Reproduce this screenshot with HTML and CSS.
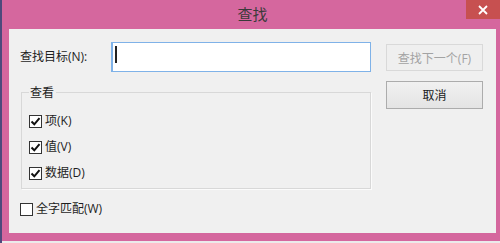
FILE: index.html
```html
<!DOCTYPE html>
<html lang="zh-CN">
<head>
<meta charset="utf-8">
<title>查找</title>
<link rel="stylesheet" href="styles.css">
</head>
<body>
<div class="window">
  <div class="titlebar">
    <span class="title">查找</span>
    <div class="close">
      <svg width="10" height="10" viewBox="0 0 10 10"><path d="M1 1 L9 9 M9 1 L1 9" stroke="#fff" stroke-width="1.8" fill="none"/></svg>
    </div>
  </div>
  <div class="content">
    <div class="left">
      <div class="find-row">
        <span class="label">查找目标(N):</span>
        <div class="input"><span class="caret"></span></div>
      </div>
      <fieldset class="group">
        <legend>查看</legend>
        <div class="check"><span class="box"><svg width="11" height="11" viewBox="0 0 11 11"><path d="M1.5 5.5 L4.3 8.3 L9.5 2.2" stroke="#111" stroke-width="2" fill="none"/></svg></span>项(K)</div>
        <div class="check"><span class="box"><svg width="11" height="11" viewBox="0 0 11 11"><path d="M1.5 5.5 L4.3 8.3 L9.5 2.2" stroke="#111" stroke-width="2" fill="none"/></svg></span>值(V)</div>
        <div class="check"><span class="box"><svg width="11" height="11" viewBox="0 0 11 11"><path d="M1.5 5.5 L4.3 8.3 L9.5 2.2" stroke="#111" stroke-width="2" fill="none"/></svg></span>数据(D)</div>
      </fieldset>
      <div class="check whole"><span class="box"></span>全字匹配(W)</div>
    </div>
    <div class="right">
      <button class="btn disabled" disabled>查找下一个(F)</button>
      <button class="btn">取消</button>
    </div>
  </div>
</div>
</body>
</html>
```
FILE: styles.css
```css
html, body {
  margin: 0;
  padding: 0;
}
body {
  width: 500px;
  height: 243px;
  overflow: hidden;
  background: linear-gradient(to right, #4d4a7c 0, #4d4a7c 2px, #ebebeb 2px);
  font-family: "Open Sans", "Noto Sans CJK SC", sans-serif;
  font-size: 12px;
  color: #1e1e1e;
}
.window {
  position: relative;
  margin-left: 2px;
  width: 498px;
  height: 241px;
  background: #d5679e;
  display: flex;
  flex-direction: column;
}
.titlebar {
  height: 29px;
  display: flex;
  align-items: center;
  justify-content: center;
}
.title {
  font-family: "Noto Sans CJK SC", sans-serif;
  font-size: 15px;
  color: #3a3a3a;
  margin-top: -2px;
  padding-left: 3px;
}
.close {
  position: absolute;
  right: 0;
  top: 0;
  width: 34px;
  height: 19px;
  background: #c75050;
  display: flex;
  align-items: center;
  justify-content: center;
}
.content {
  margin: 0 4px 8px 7px;
  height: 204px;
  background: #f0f0f0;
  display: flex;
}
.left {
  width: 362px;
  flex-shrink: 0;
  display: flex;
  flex-direction: column;
}
.find-row {
  margin-top: 13px;
  height: 30px;
  display: flex;
  align-items: center;
}
.label {
  width: 102px;
  flex-shrink: 0;
  padding-left: 11px;
  box-sizing: border-box;
  line-height: 16px;
}
.input {
  width: 260px;
  flex-shrink: 0;
  height: 30px;
  box-sizing: border-box;
  background: #fff;
  border: 1px solid #7fb2e8;
  border-left-width: 2px;
  padding: 3px 0 0 2px;
}
.caret {
  display: block;
  width: 2px;
  height: 17px;
  background: #222;
}
.group {
  margin: 12px 0 0 12px;
  width: 350px;
  box-sizing: border-box;
  border: 1px solid #d8d8d8;
  box-shadow: 1px 1px 0 #fbfbfb;
  padding: 8px 0 2px 7px;
  min-width: 0;
}
.group legend {
  padding: 0 2px 0 1px;
  line-height: 16px;
  font-family: "Noto Sans CJK SC", sans-serif;
}
.check {
  height: 26px;
  display: flex;
  align-items: center;
  line-height: 16px;
}
.box {
  width: 13px;
  height: 13px;
  box-sizing: border-box;
  border: 1px solid #333;
  background: #fff;
  margin-right: 3px;
  display: flex;
  align-items: center;
  justify-content: center;
}
.whole {
  margin: 7px 0 0 11px;
}
.right {
  margin-left: 15px;
  width: 97px;
  display: flex;
  flex-direction: column;
}
.btn {
  font-family: "Open Sans", "Noto Sans CJK SC", sans-serif;
  font-size: 12px;
  width: 97px;
  padding: 0;
  box-sizing: border-box;
  color: #1a1a1a;
  border: 1px solid #acacac;
  background: linear-gradient(#f1f1f1, #e4e4e4);
  height: 28px;
  margin-top: 10px;
}
.btn.disabled {
  margin-top: 15px;
  height: 27px;
  color: #a3a3a3;
  border-color: #d9d9d9;
  background: #efefef;
}
```
